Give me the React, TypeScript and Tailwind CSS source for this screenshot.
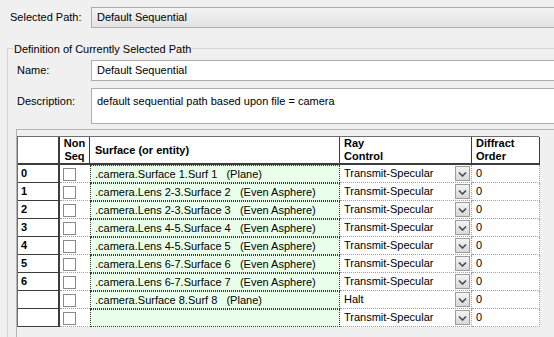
import React from "react";

interface PathRow {
  index: string,
  surface: string,
  ray: string,
}

const rows: PathRow[] = [
  { index: "0", surface: ".camera.Surface 1.Surf 1   (Plane)", ray: "Transmit-Specular" },
  { index: "1", surface: ".camera.Lens 2-3.Surface 2   (Even Asphere)", ray: "Transmit-Specular" },
  { index: "2", surface: ".camera.Lens 2-3.Surface 3   (Even Asphere)", ray: "Transmit-Specular" },
  { index: "3", surface: ".camera.Lens 4-5.Surface 4   (Even Asphere)", ray: "Transmit-Specular" },
  { index: "4", surface: ".camera.Lens 4-5.Surface 5   (Even Asphere)", ray: "Transmit-Specular" },
  { index: "5", surface: ".camera.Lens 6-7.Surface 6   (Even Asphere)", ray: "Transmit-Specular" },
  { index: "6", surface: ".camera.Lens 6-7.Surface 7   (Even Asphere)", ray: "Transmit-Specular" },
  { index: "", surface: ".camera.Surface 8.Surf 8   (Plane)", ray: "Halt" },
  { index: "", surface: "", ray: "Transmit-Specular" },
];

const DropButton: React.FC = () => (
  <div className="mt-auto mb-[1px] mr-[1px] w-[15px] h-[15px] border border-[#9c9c9c] bg-gradient-to-b from-[#f4f4f4] to-[#d8d8d8] flex items-center justify-center">
    <svg width="9" height="6" viewBox="0 0 9 6">
      <path d="M1 1.5 L4.5 5 L8 1.5" fill="none" stroke="#4a4a4a" strokeWidth="1.6" />
    </svg>
  </div>
);

const PathTable: React.FC = () => (
  <div className="grid grid-cols-[42px_30px_250px_132px_68px] w-[522px] border-t border-l border-[#6e6e6e]">
    {/* header */}
    <div className="h-[28px] bg-white border-r-2 border-b-2 border-[#3c3c3c]" />
    <div className="h-[28px] bg-white border-r border-b-2 border-[#3c3c3c] font-bold leading-[13px] flex flex-col items-center justify-center">
      <span>Non</span>
      <span>Seq</span>
    </div>
    <div className="h-[28px] bg-white border-r border-b-2 border-[#3c3c3c] font-bold flex items-center pl-[5px]">
      Surface (or entity)
    </div>
    <div className="h-[28px] bg-white border-r border-b-2 border-[#3c3c3c] font-bold leading-[13px] flex flex-col justify-center pl-[4px]">
      <span>Ray</span>
      <span>Control</span>
    </div>
    <div className="h-[28px] bg-white border-r border-b-2 border-[#3c3c3c] font-bold leading-[13px] flex flex-col justify-center pl-[4px]">
      <span>Diffract</span>
      <span>Order</span>
    </div>

    {rows.map((row, i) => (
      <React.Fragment key={i.toString()}>
        <div className="h-[18px] bg-white border-r-2 border-b border-[#3c3c3c] font-bold pl-[3px] leading-[17px]">
          {row.index}
        </div>
        <div className="h-[18px] bg-white border-b border-dotted border-[#a0a0a0] flex items-end pl-[3px] pb-[1px]">
          <div className="w-[13px] h-[13px] bg-white border border-[#8a8a8a]" />
        </div>
        <div className="h-[18px] bg-[#eaffea] border border-dotted border-[#3a3a3a] pl-[4px] leading-[16px] whitespace-pre">
          {row.surface}
        </div>
        <div className="h-[18px] bg-white border-r border-b border-dotted border-[#a0a0a0] flex">
          <span className="flex-1 pl-[4px] leading-[17px]">{row.ray}</span>
          <DropButton />
        </div>
        <div className="h-[18px] bg-white border-r border-b border-dotted border-[#a0a0a0] pl-[4px] leading-[17px]">
          0
        </div>
      </React.Fragment>
    ))}
  </div>
);

export default function App() {
  return (
    <div className="w-[554px] h-[337px] overflow-hidden bg-[#f0f0f0] text-[11px] text-black font-['Liberation_Sans',Arial,sans-serif]">
      {/* selected path */}
      <div className="flex items-center pt-[7px]">
        <span className="w-[91px] pl-[10px]">Selected Path:</span>
        <div className="flex-1 -mr-[4px] h-[21px] border border-[#adadad] bg-gradient-to-b from-[#f3f3f3] to-[#e3e3e3] pl-[5px] flex items-center">
          Default Sequential
        </div>
      </div>

      {/* definition group */}
      <div className="relative mt-[20px] ml-[7px] border-t border-l border-[#d5d5d5] pt-[11px]">
        <span className="absolute -top-[8px] left-[5px] px-[1px] bg-[#f0f0f0]">
          Definition of Currently Selected Path
        </span>

        <div className="flex items-center">
          <span className="w-[83px] pl-[9px]">Name:</span>
          <div className="flex-1 -mr-[4px] h-[21px] border border-[#adadad] bg-white pl-[5px] flex items-center">
            Default Sequential
          </div>
        </div>

        <div className="flex items-start mt-[7px]">
          <span className="w-[83px] pl-[9px] pt-[5px]">Description:</span>
          <div className="flex-1 -mr-[4px] h-[36px] border border-[#adadad] bg-white pl-[5px] pt-[4px]">
            default sequential path based upon file = camera
          </div>
        </div>

        {/* grid control */}
        <div className="mt-[5px] ml-[8px] h-[220px] border-t border-l border-[#b4b4b4] pt-[6px]">
          <PathTable />
        </div>
      </div>
    </div>
  );
}
